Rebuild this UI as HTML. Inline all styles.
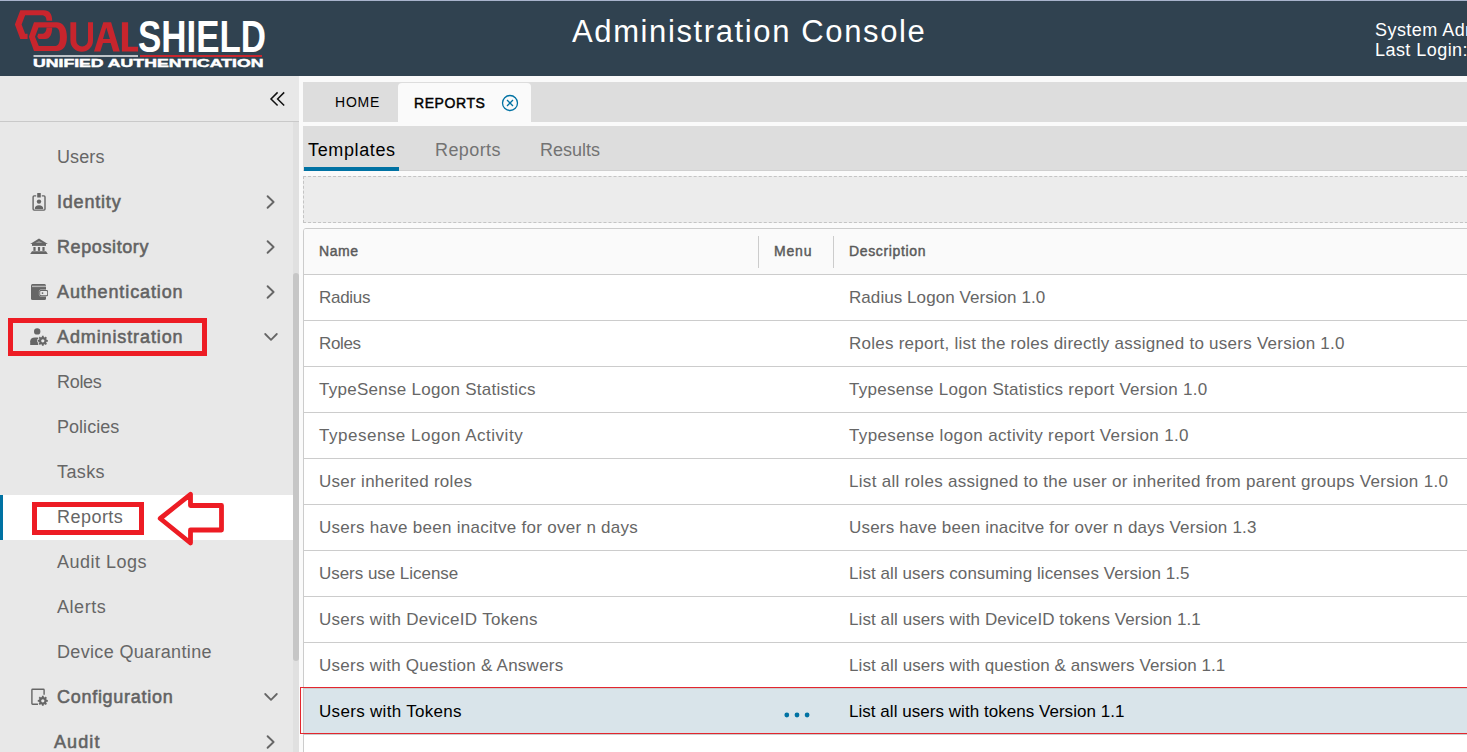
<!DOCTYPE html>
<html><head><meta charset="utf-8">
<style>
*{margin:0;padding:0;box-sizing:border-box}
html,body{width:1467px;height:752px;overflow:hidden;background:#fafafa;font-family:"Liberation Sans",sans-serif}
.abs{position:absolute}
#hdr{position:absolute;left:0;top:0;width:1467px;height:76px;background:#304250;border-top:1px solid #a8b3cc}
#title{position:absolute;left:572px;top:13px;font-size:31px;color:#fff;white-space:nowrap;line-height:36px}
#user{position:absolute;left:1375px;top:19px;font-size:18px;color:#fff;line-height:20px;white-space:nowrap;letter-spacing:0.45px}
#side{position:absolute;left:0;top:76px;width:299px;height:676px;background:#e8e8e8}
#sidetop{position:absolute;left:0;top:0;width:299px;height:46px;border-bottom:1px solid #c9c9c9}
.track{position:absolute;left:293px;top:46px;width:6px;height:630px;background:#e0e0e0}
.thumb{position:absolute;left:293px;top:197px;width:6px;height:388px;background:#c6c6c6;border-radius:3px}
.nav{position:absolute;left:0;width:293px;height:45px;font-size:18px;line-height:45px;color:#666;white-space:nowrap}
.nav .t{position:absolute;left:57px;top:0}
.nav.b{color:#626262;-webkit-text-stroke:0.55px #626262}
.nav svg{position:absolute}
.nav.act{background:#fff}
.nav.act:before{content:"";position:absolute;left:0;top:0;width:3px;height:45px;background:#0072a3}
#main{position:absolute;left:303px;top:82px;width:1164px;height:670px}
#tabbar{position:absolute;left:0;top:0;width:1164px;height:40px;background:#dddddd}
.tab{position:absolute;top:0;height:40px;font-size:14px;line-height:40px;color:#000;white-space:nowrap}
#subbar{position:absolute;left:0;top:44px;width:1164px;height:45px;background:#dddddd;border-bottom:1px solid #cfcfcf}
.sub{position:absolute;top:2px;font-size:18px;line-height:45px;color:#737373;white-space:nowrap}
#toolbar{position:absolute;left:0;top:94px;width:1170px;height:47px;background:#ececec;border:1px dashed #c4c4c4}
#grid{position:absolute;left:0;top:146px;width:1170px;height:540px;border:1px solid #cccccc;border-radius:3px;background:#fff;overflow:hidden}
.hrow{position:absolute;left:0;top:0;width:1170px;height:46px;background:#fafafa;border-bottom:1px solid #cccccc;font-size:14px;color:#5a5a5a;-webkit-text-stroke:0.45px #5a5a5a}
.row{position:absolute;left:0;width:1170px;height:46px;border-bottom:1px solid #cccccc;font-size:17px;color:#666}
.c1,.c2,.c3{position:absolute;top:0;line-height:45px;white-space:nowrap}
.c1{left:15px}.c2{left:470px}.c3{left:545px}
.sep{position:absolute;top:7px;width:1px;height:32px;background:#cccccc}
.row.sel{background:#d9e4ea;color:#000}
.red{position:absolute;border:5px solid #ed1c24}
</style></head><body>
<div id="hdr">
<svg class="abs" style="left:0;top:-1px" width="290" height="76" viewBox="0 0 290 76">
<path d="M20.3 10.2 H43.9 C49.5 10.2 52.2 14 52.2 20.7 H46.5 C46.5 17 44.5 15.3 41.4 15.3 H25.1 L21.6 24.6 L25.1 33.8 H27.6 V38.9 H20.3 L14.9 24.6 Z" fill="#c8252d"/>
<path fill-rule="evenodd" d="M34 22.3 H56.7 C63 22.3 66.9 28 66.9 37 C66.9 46 63 51 57 51 H34 L28.9 36.7 Z M38.5 27.4 H55.4 C58.5 27.4 59.9 31 59.9 36.7 C59.9 42.5 58.5 45.9 55.4 45.9 H38.8 L35 36.7 Z" fill="#c8252d"/>
<path d="M46.5 27.4 H52.2 C52.2 34 50 38.9 45.2 38.9 H38.8 L37.2 36.7 L38.2 33.8 H41.4 C45 33.8 46.5 31 46.5 27.4 Z" fill="#c8252d"/>
<path fill-rule="evenodd" d="M70.4 22.2 H76.2 V40.5 A5.9 5.9 0 0 0 88 40.5 V22.2 H93 V40.5 A11.3 11.3 0 0 1 70.4 40.5 Z" fill="#c8252d"/>
<path fill-rule="evenodd" d="M94 51.5 L103.3 22.2 H111.1 L119.8 51.5 H113.2 L110.7 43.1 H103 L100.3 51.5 Z M106.3 27.6 L103 38.9 H109.9 Z" fill="#c8252d"/>
<path d="M121.9 22.2 H128.1 V46.7 H138 V51.5 H121.9 Z" fill="#c8252d"/>
<text x="138" y="51.5" font-family="Liberation Sans" font-weight="bold" font-size="43.5" fill="#fff" textLength="128" lengthAdjust="spacingAndGlyphs">SHIELD</text>
<rect x="33.5" y="55" width="104.5" height="2" fill="#bfc4c9"/>
<rect x="140" y="55" width="122" height="2" fill="#c8252d"/>
<text x="33" y="67" font-family="Liberation Sans" font-weight="bold" font-size="11.5" fill="#fff" stroke="#fff" stroke-width="0.45" textLength="230.5" lengthAdjust="spacingAndGlyphs">UNIFIED AUTHENTICATION</text>
</svg>
  <div id="title" style="letter-spacing:1.619px;">Administration Console</div>
  <div id="user">System Admin<br>Last Login: 2024</div>
</div>
<div id="side">
  <div id="sidetop">
    <svg class="abs" style="left:268px;top:14px" width="20" height="18" viewBox="0 0 20 18">
      <path d="M9.6 2.4 L3 9 L9.6 15.5 M16.2 2.4 L9.6 9 L16.2 15.5" fill="none" stroke="#111" stroke-width="1.5"/>
    </svg>
  </div>
  <div class="track"></div><div class="thumb"></div>
<div class="nav" style="top:59px"><span class="t" style="left:57px;letter-spacing:0.100px;">Users</span></div>
<div class="nav b" style="top:104px"><svg class="abs" style="left:24px;top:8px" width="30" height="30" viewBox="0 0 30 30"><path d="M12.2 7.9 H10.1 Q9.1 7.9 9.1 8.9 V21.1 Q9.1 22.1 10.1 22.1 H20 Q21 22.1 21 21.1 V8.9 Q21 7.9 20 7.9 H17.8" fill="none" stroke="#666" stroke-width="1.4"/><rect x="13.2" y="5" width="3.6" height="4.6" rx="0.5" fill="#666"/><circle cx="15" cy="13.6" r="2.2" fill="#666"/><path d="M10.8 20.9 Q10.8 17.3 15 17.3 Q19.2 17.3 19.2 20.9 Z" fill="#666"/></svg><span class="t" style="left:57px;letter-spacing:0.800px;">Identity</span><svg class="abs" style="left:265px;top:14px" width="12" height="16" viewBox="0 0 12 16"><path d="M2.6 2.2 L8.6 8 L2.6 13.8" fill="none" stroke="#666" stroke-width="1.9" stroke-linecap="round" stroke-linejoin="round"/></svg></div>
<div class="nav b" style="top:149px"><svg class="abs" style="left:24px;top:7px" width="30" height="30" viewBox="0 0 30 30"><path d="M15 6.6 L23.8 11.9 H6.2 Z" fill="#666"/><path d="M15 9 L18.6 11 H11.4 Z" fill="#9a9a9a"/><rect x="8" y="11.6" width="14" height="2.3" fill="#666"/><rect x="9.4" y="15" width="2.2" height="3.9" fill="#666"/><rect x="13.9" y="15" width="2.2" height="3.9" fill="#666"/><rect x="18.4" y="15" width="2.2" height="3.9" fill="#666"/><path d="M8 19.2 H22 L23.8 22 H6.2 Z" fill="#666"/></svg><span class="t" style="left:57px;letter-spacing:0.600px;">Repository</span><svg class="abs" style="left:265px;top:14px" width="12" height="16" viewBox="0 0 12 16"><path d="M2.6 2.2 L8.6 8 L2.6 13.8" fill="none" stroke="#666" stroke-width="1.9" stroke-linecap="round" stroke-linejoin="round"/></svg></div>
<div class="nav b" style="top:194px"><svg class="abs" style="left:24px;top:8px" width="30" height="30" viewBox="0 0 30 30"><rect x="7" y="6" width="15" height="16" rx="1.5" fill="#666"/><rect x="8" y="7.7" width="14" height="1.4" fill="#b5b5b5"/><rect x="15.4" y="12" width="8.6" height="6.2" rx="1.3" fill="#666" stroke="#e8e8e8" stroke-width="0.8" paint-order="stroke"/><rect x="16.2" y="13" width="7" height="4.2" rx="0.8" fill="#e8e8e8"/><circle cx="18.5" cy="15.1" r="0.9" fill="#666"/></svg><span class="t" style="left:57px;letter-spacing:0.885px;">Authentication</span><svg class="abs" style="left:265px;top:14px" width="12" height="16" viewBox="0 0 12 16"><path d="M2.6 2.2 L8.6 8 L2.6 13.8" fill="none" stroke="#666" stroke-width="1.9" stroke-linecap="round" stroke-linejoin="round"/></svg></div>
<div class="nav b" style="top:239px"><svg class="abs" style="left:24px;top:7px" width="30" height="30" viewBox="0 0 30 30"><circle cx="13.2" cy="9.4" r="3.2" fill="#666"/><path d="M6.2 23 V19.3 Q6.2 15.5 11 15.4 H14.5 L14.5 23 Z" fill="#666"/><g transform="translate(18.8 18.8)"><path d="M-0.94 -3.78 L-0.90 -5.02 L0.90 -5.02 L0.94 -3.78 L2.01 -3.34 L2.92 -4.18 L4.18 -2.92 L3.34 -2.01 L3.78 -0.94 L5.02 -0.90 L5.02 0.90 L3.78 0.94 L3.34 2.01 L4.18 2.92 L2.92 4.18 L2.01 3.34 L0.94 3.78 L0.90 5.02 L-0.90 5.02 L-0.94 3.78 L-2.01 3.34 L-2.92 4.18 L-4.18 2.92 L-3.34 2.01 L-3.78 0.94 L-5.02 0.90 L-5.02 -0.90 L-3.78 -0.94 L-3.34 -2.01 L-4.18 -2.92 L-2.92 -4.18 L-2.01 -3.34 Z" fill="#666" stroke="#e8e8e8" stroke-width="1.3" paint-order="stroke"/><circle r="1.6" fill="#e8e8e8"/></g></svg><span class="t" style="left:57px;letter-spacing:0.885px;">Administration</span><svg class="abs" style="left:263px;top:16px" width="16" height="12" viewBox="0 0 16 12"><path d="M2.2 3 L8 8.8 L13.8 3" fill="none" stroke="#666" stroke-width="1.8" stroke-linecap="round" stroke-linejoin="round"/></svg></div>
<div class="nav" style="top:284px"><span class="t" style="left:57px;letter-spacing:-0.300px;">Roles</span></div>
<div class="nav" style="top:329px"><span class="t" style="left:57px;letter-spacing:0.029px;">Policies</span></div>
<div class="nav" style="top:374px"><span class="t" style="left:57px;letter-spacing:0.375px;">Tasks</span></div>
<div class="nav act" style="top:419px"><span class="t" style="left:57px;letter-spacing:0.467px;">Reports</span></div>
<div class="nav" style="top:464px"><span class="t" style="left:57px;letter-spacing:0.500px;">Audit Logs</span></div>
<div class="nav" style="top:509px"><span class="t" style="left:57px;letter-spacing:0.560px;">Alerts</span></div>
<div class="nav" style="top:554px"><span class="t" style="left:57px;letter-spacing:0.338px;">Device Quarantine</span></div>
<div class="nav b" style="top:599px"><svg class="abs" style="left:24px;top:7px" width="30" height="30" viewBox="0 0 30 30"><path d="M14 22.3 H8.6 Q7.9 22.3 7.9 21.6 V8 Q7.9 7.3 8.6 7.3 H19.4 Q20.1 7.3 20.1 8 V12.8" fill="none" stroke="#666" stroke-width="1.4"/><g transform="translate(18.8 18.8)"><path d="M-0.94 -3.78 L-0.90 -5.02 L0.90 -5.02 L0.94 -3.78 L2.01 -3.34 L2.92 -4.18 L4.18 -2.92 L3.34 -2.01 L3.78 -0.94 L5.02 -0.90 L5.02 0.90 L3.78 0.94 L3.34 2.01 L4.18 2.92 L2.92 4.18 L2.01 3.34 L0.94 3.78 L0.90 5.02 L-0.90 5.02 L-0.94 3.78 L-2.01 3.34 L-2.92 4.18 L-4.18 2.92 L-3.34 2.01 L-3.78 0.94 L-5.02 0.90 L-5.02 -0.90 L-3.78 -0.94 L-3.34 -2.01 L-4.18 -2.92 L-2.92 -4.18 L-2.01 -3.34 Z" fill="#666" stroke="#e8e8e8" stroke-width="1.3" paint-order="stroke"/><circle r="1.6" fill="#e8e8e8"/></g></svg><span class="t" style="left:57px;letter-spacing:0.717px;">Configuration</span><svg class="abs" style="left:263px;top:16px" width="16" height="12" viewBox="0 0 16 12"><path d="M2.2 3 L8 8.8 L13.8 3" fill="none" stroke="#666" stroke-width="1.8" stroke-linecap="round" stroke-linejoin="round"/></svg></div>
<div class="nav b" style="top:644px"><span class="t" style="left:54px;letter-spacing:1.100px;">Audit</span><svg class="abs" style="left:265px;top:14px" width="12" height="16" viewBox="0 0 12 16"><path d="M2.6 2.2 L8.6 8 L2.6 13.8" fill="none" stroke="#666" stroke-width="1.9" stroke-linecap="round" stroke-linejoin="round"/></svg></div>
  <div class="red" style="left:8px;top:242px;width:199px;height:38px"></div>
  <div class="red" style="left:32px;top:426px;width:112px;height:33px"></div>
  <svg class="abs" style="left:150px;top:410px" width="80" height="70" viewBox="150 486 80 70">
    <path d="M160.2 518.5 L190.5 494.3 V505.5 H221.5 V530 H190.5 V543 Z" fill="none" stroke="#ed1c24" stroke-width="4.8" stroke-linejoin="round"/>
  </svg>
</div>
<div id="main">
  <div id="tabbar">
    <div class="tab" style="left:32px;letter-spacing:0.800px;">HOME</div>
    <div class="abs" style="left:95px;top:1px;width:133px;height:39px;background:#fafafa;border-radius:4px 4px 0 0"></div>
    <div class="tab" style="left:111px;top:1px;-webkit-text-stroke:0.45px #000;letter-spacing:0.583px;">REPORTS</div>
    <svg class="abs" style="left:198px;top:12px" width="18" height="18" viewBox="0 0 18 18"><circle cx="9" cy="9" r="7.5" fill="none" stroke="#0072a3" stroke-width="1.3"/><path d="M6 6 L12 12 M12 6 L6 12" stroke="#0072a3" stroke-width="1.3"/></svg>
  </div>
  <div id="subbar">
    <div class="sub" style="left:5px;color:#000;letter-spacing:0.625px;">Templates</div>
    <div class="abs" style="left:1px;top:41px;width:95px;height:4px;background:#0072a3"></div>
    <div class="sub" style="left:132px;letter-spacing:0.400px;">Reports</div>
    <div class="sub" style="left:237px;">Results</div>
  </div>
  <div id="toolbar"></div>
  <div id="grid">
<div class="hrow"><div class="c1" style="letter-spacing:0.567px;">Name</div><div class="sep" style="left:454px"></div><div class="c2" style="letter-spacing:0.800px;">Menu</div><div class="sep" style="left:529px"></div><div class="c3" style="letter-spacing:0.640px;">Description</div></div>
<div class="row" style="top:46px"><div class="c1" style="letter-spacing:-0.280px;">Radius</div><div class="c3" style="letter-spacing:0.065px;">Radius Logon Version 1.0</div></div>
<div class="row" style="top:92px"><div class="c1" style="letter-spacing:-0.350px;">Roles</div><div class="c3" style="letter-spacing:0.248px;">Roles report, list the roles directly assigned to users Version 1.0</div></div>
<div class="row" style="top:138px"><div class="c1" style="letter-spacing:0.272px;">TypeSense Logon Statistics</div><div class="c3" style="letter-spacing:0.282px;">Typesense Logon Statistics report Version 1.0</div></div>
<div class="row" style="top:184px"><div class="c1" style="letter-spacing:0.513px;">Typesense Logon Activity</div><div class="c3" style="letter-spacing:0.367px;">Typesense logon activity report Version 1.0</div></div>
<div class="row" style="top:230px"><div class="c1" style="letter-spacing:0.289px;">User inherited roles</div><div class="c3" style="letter-spacing:0.300px;">List all roles assigned to the user or inherited from parent groups Version 1.0</div></div>
<div class="row" style="top:276px"><div class="c1" style="letter-spacing:0.277px;">Users have been inacitve for over n days</div><div class="c3" style="letter-spacing:0.188px;">Users have been inacitve for over n days Version 1.3</div></div>
<div class="row" style="top:322px"><div class="c1" style="letter-spacing:-0.038px;">Users use License</div><div class="c3" style="letter-spacing:0.073px;">List all users consuming licenses Version 1.5</div></div>
<div class="row" style="top:368px"><div class="c1" style="letter-spacing:0.284px;">Users with DeviceID Tokens</div><div class="c3" style="letter-spacing:0.087px;">List all users with DeviceID tokens Version 1.1</div></div>
<div class="row" style="top:414px"><div class="c1" style="letter-spacing:0.254px;">Users with Question &amp; Answers</div><div class="c3" style="letter-spacing:0.082px;">List all users with question &amp; answers Version 1.1</div></div>
<div class="row sel" style="top:460px"><div class="c1" style="letter-spacing:0.312px;">Users with Tokens</div><svg class="abs" style="left:478px;top:22px" width="30" height="8" viewBox="0 0 30 8"><circle cx="4.8" cy="4" r="2.4" fill="#0072a3"/><circle cx="15" cy="4" r="2.4" fill="#0072a3"/><circle cx="25.1" cy="4" r="2.4" fill="#0072a3"/></svg><div class="c3" style="letter-spacing:0.038px;">List all users with tokens Version 1.1</div></div>
<div class="row" style="top:506px"><div class="c1" style=""></div><div class="c3" style=""></div></div>
  </div>
</div>
<div class="abs" style="left:300px;top:687px;width:1200px;height:47px;border:1px solid #e3262e"></div>
</body></html>
